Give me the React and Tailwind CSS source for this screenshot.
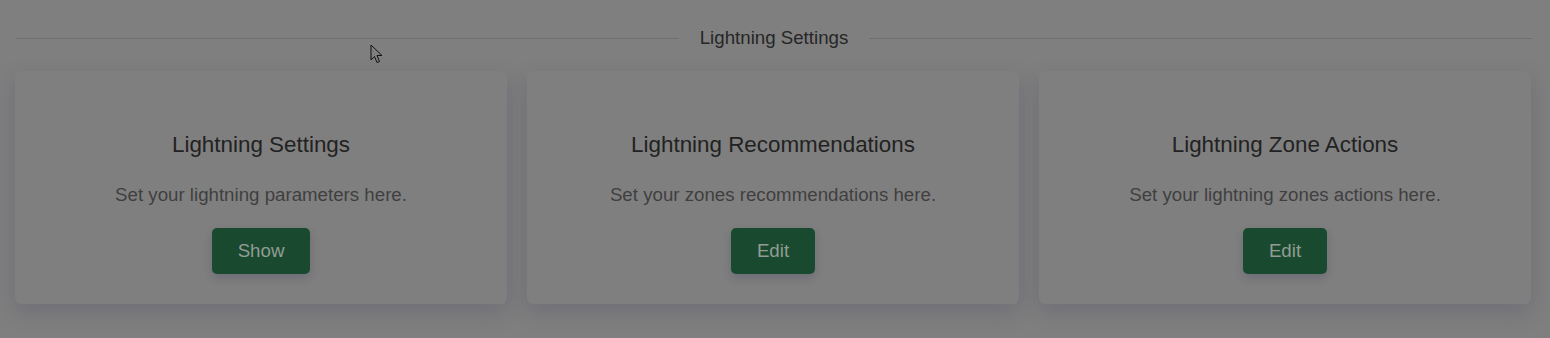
import React from "react";

const cards = [
  { title: "Lightning Settings", text: "Set your lightning parameters here.", btn: "Show" },
  { title: "Lightning Recommendations", text: "Set your zones recommendations here.", btn: "Edit" },
  { title: "Lightning Zone Actions", text: "Set your lightning zones actions here.", btn: "Edit" },
];

export default function App() {
  return (
    <div
      className="relative w-[1550px] h-[338px] overflow-hidden bg-[#7f7f7f]"
      style={{ fontFamily: '"Liberation Sans", Arial, sans-serif' }}
    >
      <div className="flex items-center pt-[25px] pl-[16px] pr-[18px]">
        <div className="flex-1 h-px bg-[#6f6f73]" />
        <div className="px-[21px] text-[18.7px] leading-[26px] text-[#262626]">Lightning Settings</div>
        <div className="flex-1 h-px bg-[#6f6f73]" />
      </div>
      <div className="grid grid-cols-3 gap-[20px] pl-[15px] pr-[19px] mt-[20px]">
        {cards.map((c) => (
          <div
            key={c.title}
            className="h-[233px] rounded-[6px] bg-[#7f7f7f] shadow-[0_8px_22px_rgba(45,45,85,0.2)] flex flex-col items-center pt-[59px]"
          >
            <div className="text-[22.4px] leading-[30px] text-[#222222]">{c.title}</div>
            <div className="mt-[24px] text-[18.7px] leading-[22px] text-[#3f3f3f]">{c.text}</div>
            <button className="mt-[22px] h-[46px] px-[26px] rounded-[5px] bg-[#194a2f] text-[18.7px] text-[#929c95] shadow-[0_4px_8px_rgba(40,40,90,0.22)]">
              {c.btn}
            </button>
          </div>
        ))}
      </div>
      <svg className="absolute left-[370px] top-[44px]" width="14" height="20" viewBox="0 0 14 20">
        <path d="M1 1 L1 16 L4.5 12.5 L7 18.5 L9.5 17.5 L7 11.5 L12 11.5 Z" fill="#7f7f7f" stroke="#111" strokeWidth="1" strokeLinejoin="round" />
      </svg>
    </div>
  );
}
